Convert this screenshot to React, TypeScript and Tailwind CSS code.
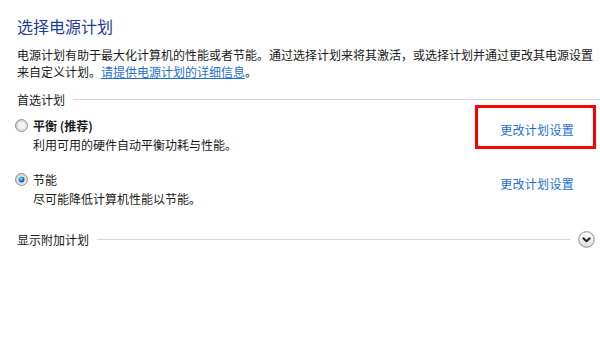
import React from "react";

const FONT = '"Microsoft YaHei", "Noto Sans CJK SC", "Noto Sans", sans-serif';

function Radio({ checked }: { checked: boolean }) {
    return (
        <svg width="13" height="13" viewBox="0 0 13 13" className="shrink-0">
            <defs>
                <linearGradient id="rbg" x1="0" y1="0" x2="1" y2="1">
                    <stop offset="0" stopColor="#c9c9c9" />
                    <stop offset="1" stopColor="#f7f7f7" />
                </linearGradient>
                <radialGradient id="dot" cx="0.4" cy="0.35" r="0.7">
                    <stop offset="0" stopColor="#9fd6ff" />
                    <stop offset="0.5" stopColor="#2f86d6" />
                    <stop offset="1" stopColor="#0d3f8a" />
                </radialGradient>
            </defs>
            <circle cx="6.5" cy="6.5" r="6" fill="url(#rbg)" stroke="#8e8f8f" strokeWidth="1" />
            <circle cx="6.5" cy="6.5" r="4.3" fill="#f4f4f4" stroke="#d0d0d0" strokeWidth="0.8" />
            {checked && <circle cx="6.5" cy="6.5" r="3" fill="url(#dot)" />}
        </svg>
    );
}

function Chevron() {
    return (
        <svg width="17" height="17" viewBox="0 0 17 17" className="shrink-0">
            <defs>
                <linearGradient id="chv" x1="0" y1="0" x2="0" y2="1">
                    <stop offset="0" stopColor="#ffffff" />
                    <stop offset="1" stopColor="#dcdcdc" />
                </linearGradient>
            </defs>
            <circle cx="8.5" cy="8.5" r="7.8" fill="url(#chv)" stroke="#8c8c8c" strokeWidth="1" />
            <path d="M5.3 7.2 L8.5 10.3 L11.7 7.2" fill="none" stroke="#1f1f1f" strokeWidth="1.9" strokeLinecap="round" strokeLinejoin="round" />
        </svg>
    );
}

function Plan({
    name,
    desc,
    checked,
    bold,
    highlight,
}: {
    name: string;
    desc: string;
    checked: boolean;
    bold?: boolean;
    highlight?: boolean;
}) {
    return (
        <div className="flex items-start justify-between pl-[15px] pr-[26px]">
            <div className="flex items-start gap-[5px]">
                <div className="pt-[3px]">
                    <Radio checked={checked} />
                </div>
                <div className="flex flex-col">
                    <span className={`text-[12px] leading-[19px] text-[#1a1a1a] ${bold ? "font-bold" : ""}`}>
                        {name}
                    </span>
                    <span className="text-[12px] leading-[19px] text-[#1a1a1a]">{desc}</span>
                </div>
            </div>
            <div className="relative">
                <a className="text-[12px] leading-[19px] text-[#1f6fcf] tracking-[0.3px]">更改计划设置</a>
                {highlight && (
                    <span className="absolute left-[-25px] right-[-22px] top-[-11px] bottom-[-9px] border-[3px] border-[#ff0000]" />
                )}
            </div>
        </div>
    );
}

export default function App() {
    return (
        <div className="w-[600px] h-[345px] bg-white overflow-hidden" style={{ fontFamily: FONT }}>
            <div className="pl-[17px] pt-[15px]">
                <h1 className="text-[16px] leading-[22px] text-[#1e3c96]">选择电源计划</h1>
                <p className="mt-[9px] text-[12px] leading-[17px] text-[#1a1a1a] whitespace-nowrap">
                    电源计划有助于最大化计算机的性能或者节能。通过选择计划来将其激活，或选择计划并通过更改其电源设置
                    <br />
                    来自定义计划。
                    <a className="text-[#1f6fcf] underline">请提供电源计划的详细信息</a>。
                </p>
            </div>

            <div className="mt-[10px] pl-[17px] flex items-center gap-[8px]">
                <span className="text-[12px] leading-[19px] text-[#1a1a1a]">首选计划</span>
                <div className="flex-1 h-px bg-[#d6d6d6]" />
            </div>

            <div className="mt-[7px] flex flex-col gap-[16px]">
                <Plan name="平衡 (推荐)" desc="利用可用的硬件自动平衡功耗与性能。" checked={false} bold highlight />
                <Plan name="节能" desc="尽可能降低计算机性能以节能。" checked />
            </div>

            <div className="mt-[22px] pl-[17px] pr-[5px] flex items-center gap-[8px]">
                <span className="text-[12px] leading-[19px] text-[#1a1a1a]">显示附加计划</span>
                <div className="flex-1 h-px bg-[#d6d6d6]" />
                <Chevron />
            </div>
        </div>
    );
}
